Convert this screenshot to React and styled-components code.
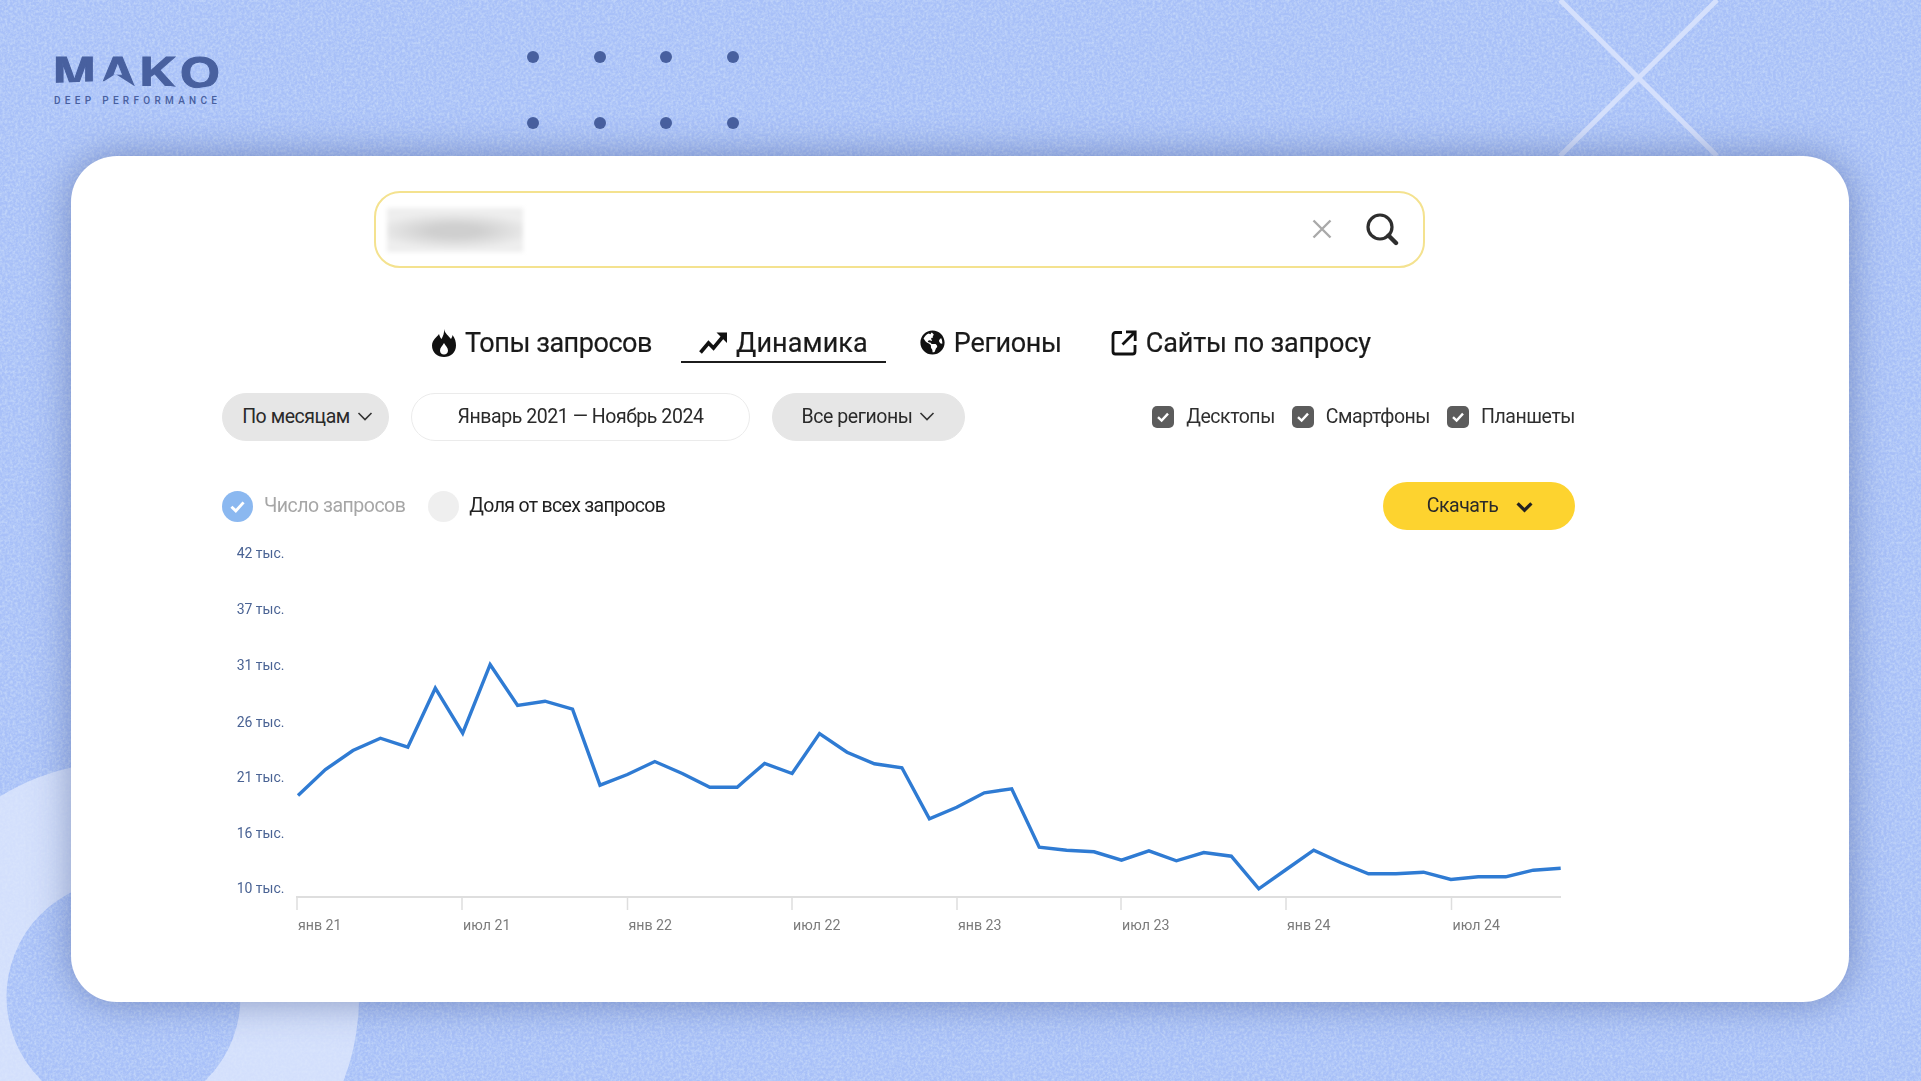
import React from "react";
import styled, { createGlobalStyle } from "styled-components";
import { FaGlobeAmericas } from "react-icons/fa";

const GlobalStyle = createGlobalStyle`
  html, body {
    margin: 0;
    padding: 0;
    background: #a8c0f8;
    font-family: "Roboto", "Noto Sans", sans-serif;
  }
`;

const Page = styled.div`
  position: relative;
  width: 1921px;
  height: 1081px;
  overflow: hidden;
  background: #a8c0f8;
`;

const Backdrop = styled.svg`
  position: absolute;
  top: 0;
  left: 0;
  width: 1921px;
  height: 1081px;
`;

const Header = styled.header`
  position: relative;
  display: flex;
  height: 156px;
  padding-left: 53px;
`;

const Logo = styled.div`
  width: 166px;
  margin-top: 49px;
  color: #48609f;
`;

const LogoMark = styled.div`
  width: 166px;
  height: 48px;
  font-family: "Liberation Sans", sans-serif;
  font-size: 45px;
  font-weight: 700;
  line-height: 48px;
  letter-spacing: 3px;
  white-space: nowrap;
  -webkit-text-stroke: 1px #48609f;
  transform: scaleX(1.14);
  transform-origin: left top;
  clip-path: polygon(0 0, 100% 0, 100% 75%, 87% 75%, 73% 84%, 62% 77%, 43% 77%, 33% 52%, 27% 67%, 23% 67%, 0 71%);
`;

const LogoTag = styled.div`
  margin: -2px 0 0 1px;
  font-size: 10px;
  font-weight: 500;
  line-height: 12px;
  letter-spacing: 4.3px;
  white-space: nowrap;
`;

const DotGrid = styled.div`
  display: grid;
  grid-template-columns: repeat(4, 12px);
  column-gap: 54.7px;
  row-gap: 54px;
  margin: 51px 0 0 308px;
  height: 78px;
`;

const Dot = styled.span`
  width: 12px;
  height: 12px;
  border-radius: 50%;
  background: #48609f;
`;

const Card = styled.main`
  position: relative;
  box-sizing: border-box;
  width: 1778px;
  height: 846px;
  margin-left: 71px;
  padding-top: 35px;
  border-radius: 46px;
  background: #fff;
  box-shadow: 0 0 38px rgba(58, 78, 136, 0.5);
  color: #1c1c1c;
`;

const SearchBox = styled.div`
  box-sizing: border-box;
  display: flex;
  align-items: center;
  width: 1051px;
  height: 77px;
  margin-left: 303px;
  padding: 0 24px 0 11px;
  border: 2px solid #f4e28f;
  border-radius: 26px;
`;

const BlurredQuery = styled.div`
  width: 136px;
  height: 44px;
  background: radial-gradient(ellipse 60% 42% at 50% 52%, #cfcfcf 30%, #eeeeee 100%);
  filter: blur(2px);
`;

const ClearIcon = styled.svg`
  margin: 0 32px 2px auto;
  width: 22px;
  height: 22px;
  stroke: #a9a9a9;
  stroke-width: 2.4;
  fill: none;
`;

const SearchIcon = styled.svg`
  width: 34px;
  height: 34px;
  margin-bottom: 1px;
  stroke: #2e2e2e;
  fill: none;
`;

const Tabs = styled.nav`
  display: flex;
  height: 39px;
  margin: 56px 0 0 343px;
  filter: blur(0.35px);
`;

const Tab = styled.div`
  display: flex;
  align-items: center;
  gap: 9px;
  margin-right: ${(p) => p.$gap || 0}px;
  padding: 0 18px;
  border-bottom: 2px solid ${(p) => (p.$active ? "#1c1c1c" : "transparent")};
  font-size: 27px;
  letter-spacing: ${(p) => p.$track || 0}px;
  color: #1a1a1a;
  white-space: nowrap;
  -webkit-text-stroke: 0.2px #1a1a1a;
  svg {
    flex: none;
    color: #111;
  }
`;

const Body = styled.section`
  width: 1353px;
  margin-left: 151px;
  filter: blur(0.35px);
`;

const Controls = styled.div`
  display: flex;
  align-items: center;
  gap: 22px;
  height: 48px;
  margin-top: 30px;
`;

const Pill = styled.div`
  box-sizing: border-box;
  display: flex;
  align-items: center;
  justify-content: center;
  gap: 7px;
  width: ${(p) => p.$width}px;
  height: 48px;
  padding: 0 0 2px ${(p) => p.$inset || 0}px;
  border-radius: 24px;
  border: 1px solid ${(p) => (p.$outline ? "#ebebeb" : "#e6e6e6")};
  background: ${(p) => (p.$outline ? "#fff" : "#e6e6e6")};
  font-size: 19.5px;
  letter-spacing: -0.45px;
  color: #2a2a2a;
  white-space: nowrap;
`;

const Devices = styled.div`
  display: flex;
  align-items: center;
  gap: 17px;
  margin-left: auto;
`;

const Device = styled.label`
  display: flex;
  align-items: center;
  gap: 12px;
  font-size: 19.5px;
  letter-spacing: -0.45px;
  color: #2f2f2f;
`;

const Caption = styled.span`
  margin-bottom: 2px;
`;

const CheckBox = styled.span`
  display: flex;
  align-items: center;
  justify-content: center;
  width: 22px;
  height: 22px;
  border-radius: 5px;
  background: #5c5c5c;
`;

const Metrics = styled.div`
  display: flex;
  align-items: center;
  height: 48px;
  margin-top: 41px;
`;

const Metric = styled.div`
  display: flex;
  align-items: center;
  gap: ${(p) => (p.$on ? 11 : 10)}px;
  margin-right: 23px;
  font-size: 19.5px;
  letter-spacing: ${(p) => (p.$on ? -0.5 : -0.68)}px;
  color: ${(p) => (p.$on ? "#a6a6a6" : "#222")};
`;

const Radio = styled.span`
  display: flex;
  align-items: center;
  justify-content: center;
  width: 31px;
  height: 31px;
  border-radius: 50%;
  background: ${(p) => (p.$on ? "#8bb8f0" : "#efefef")};
`;

const DownloadButton = styled.button`
  display: flex;
  align-items: center;
  justify-content: center;
  gap: 18px;
  width: 192px;
  height: 48px;
  margin-left: auto;
  padding: 0 0 0 2px;
  border: 0;
  border-radius: 24px;
  background: #fdd32f;
  font-family: inherit;
  font-size: 19.5px;
  letter-spacing: -0.45px;
  color: #2a2a2a;
`;

const Chart = styled.svg`
  display: block;
  width: 1353px;
  height: 410px;
  text {
    font-family: "Roboto", "Noto Sans", sans-serif;
  }
`;

const YLabel = styled.text`
  font-size: 14px;
  fill: #4a6394;
`;

const XLabel = styled.text`
  font-size: 14.2px;
  fill: #7b7b7b;
`;

const Chevron = ({ size = 16, width = 1.6, color = "#333" }) => (
  <svg width={size} height={size} viewBox="0 0 16 16" fill="none" stroke={color} strokeWidth={width}>
    <path d="M1.5 5 8 11.5 14.5 5" />
  </svg>
);

const Check = ({ size = 14, color = "#fff" }) => (
  <svg width={size} height={size} viewBox="0 0 14 14" fill="none" stroke={color} strokeWidth="2.4">
    <path d="M2 7.2 5.6 10.6 12 3.6" />
  </svg>
);

const FlameIcon = () => (
  <svg width="24" height="28" viewBox="0 0 24 28" fill="#111" fillRule="evenodd">
    <path d="M12 0C13 5 17 7 19 10 20 8 20.5 7 20.5 6 23 9 24 13 24 16.5 24 23.5 18.5 28 12 28 5.5 28 0 23.5 0 16.5 0 11 5 8 7 5 8 8 8.5 9 9.5 10 11 7 12.5 4 12 0ZM12 14C10.5 17 8 18.5 8 21.5 8 24 9.8 25.5 12 25.5 14.2 25.5 16 24 16 21.5 16 18.5 13.5 17 12 14Z" />
  </svg>
);

const TrendIcon = () => (
  <svg width="28" height="26" viewBox="0 0 28 26" fill="none">
    <path d="M1.5 22.5 9.5 13l5 5L24 6.5" stroke="#111" strokeWidth="3.6" />
    <path d="M17.5 2.5H28V13Z" fill="#111" />
  </svg>
);

const OpenIcon = () => (
  <svg width="26" height="26" viewBox="0 0 26 26" fill="none" stroke="#111" strokeWidth="2.8">
    <path d="M11 2.5H4.5a2.5 2.5 0 0 0-2.5 2.5v16.5A2.5 2.5 0 0 0 4.5 24h17a2.5 2.5 0 0 0 2.5-2.5V15" />
    <path d="M11.5 14.5 23 3M15 1.8h9.2V11" />
  </svg>
);

const series = [
  795, 769, 750, 737.7, 746.7, 687.7, 732.7, 664, 705, 700.7, 708.7, 784.7, 774, 761, 773, 786.7, 786.7, 763,
  773, 733, 751.7, 763.3, 767.3, 818.3, 806.7, 792.3, 788.3, 846.7, 849.7, 851.3, 859.7, 850.3, 860.3, 852,
  855.7, 888.3, 869, 849.7, 862.3, 873.3, 873.3, 871.7, 879, 876.3, 876.3, 869.7, 867.7,
];
const linePoints = series.map((y, i) => `${(298 + i * 27.45).toFixed(1)},${y + 0.5}`).join(" ");

const yTicks = [
  ["42 тыс.", 552],
  ["37 тыс.", 608],
  ["31 тыс.", 664],
  ["26 тыс.", 721],
  ["21 тыс.", 776],
  ["16 тыс.", 832],
  ["10 тыс.", 887],
];

const xTicks = [
  ["янв 21", 297],
  ["июл 21", 462],
  ["янв 22", 627.5],
  ["июл 22", 792],
  ["янв 23", 957],
  ["июл 23", 1121],
  ["янв 24", 1286],
  ["июл 24", 1451.5],
];

const App = () => (
  <Page>
    <GlobalStyle />
    <Backdrop viewBox="0 0 1921 1081" aria-hidden="true">
      <defs>
        <filter id="grain" x="0" y="0" width="100%" height="100%">
          <feTurbulence type="fractalNoise" baseFrequency="0.38" numOctaves="3" seed="4" />
          <feColorMatrix values="0 0 0 0 0.55  0 0 0 0 0.68  0 0 0 0 0.95  1.8 0 0 0 -0.62" />
          <feGaussianBlur stdDeviation="0.7" />
        </filter>
      </defs>
      <rect width="1921" height="1081" filter="url(#grain)" />
      <circle cx="123.5" cy="997" r="176.25" fill="none" stroke="#dfe8fd" strokeOpacity="0.78" strokeWidth="118.5" />
      <path d="M1560 0 1717 156M1717 0 1560 156" stroke="#d5e0fc" strokeWidth="5" />
    </Backdrop>

    <Header>
      <Logo>
        <LogoMark>MAKO</LogoMark>
        <LogoTag>DEEP PERFORMANCE</LogoTag>
      </Logo>
      <DotGrid>
        {Array.from({ length: 8 }, (_, i) => (
          <Dot key={i} />
        ))}
      </DotGrid>
    </Header>

    <Card>
      <SearchBox>
        <BlurredQuery />
        <ClearIcon viewBox="0 0 22 22">
          <path d="M2.5 2.5 19.5 19.5M19.5 2.5 2.5 19.5" />
        </ClearIcon>
        <SearchIcon viewBox="0 0 34 34">
          <circle cx="15" cy="15" r="12" strokeWidth="3.2" />
          <path d="M23.5 23.5 31 31" strokeWidth="4.4" strokeLinecap="round" />
        </SearchIcon>
      </SearchBox>

      <Tabs>
        <Tab $gap={11} $track={-0.46}>
          <FlameIcon />
          Топы запросов
        </Tab>
        <Tab $active $gap={16} $track={0.1}>
          <TrendIcon />
          Динамика
        </Tab>
        <Tab $gap={13} $track={-0.3}>
          <FaGlobeAmericas size={25} />
          Регионы
        </Tab>
        <Tab $track={-0.16}>
          <OpenIcon />
          Сайты по запросу
        </Tab>
      </Tabs>

      <Body>
        <Controls>
          <Pill $width={167} $inset={4}>
            По месяцам
            <Chevron />
          </Pill>
          <Pill $width={339} $outline>
            Январь 2021 — Ноябрь 2024
          </Pill>
          <Pill $width={193}>
            Все регионы
            <Chevron />
          </Pill>
          <Devices>
            {["Десктопы", "Смартфоны", "Планшеты"].map((name) => (
              <Device key={name}>
                <CheckBox>
                  <Check />
                </CheckBox>
                <Caption>{name}</Caption>
              </Device>
            ))}
          </Devices>
        </Controls>

        <Metrics>
          <Metric $on>
            <Radio $on>
              <Check size={17} />
            </Radio>
            <Caption>Число запросов</Caption>
          </Metric>
          <Metric>
            <Radio />
            <Caption>Доля от всех запросов</Caption>
          </Metric>
          <DownloadButton>
            <Caption>Скачать</Caption>
            <Chevron size={17} width={3} color="#222" />
          </DownloadButton>
        </Metrics>

        <Chart viewBox="222 530 1353 410">
          {yTicks.map(([label, y]) => (
            <YLabel key={label} x="284.5" y={y + 6} textAnchor="end">
              {label}
            </YLabel>
          ))}
          <path d="M296 897H1561" stroke="#dedede" strokeWidth="2" />
          {xTicks.map(([label, x]) => (
            <g key={label}>
              <path d={`M${x} 897v13`} stroke="#dedede" strokeWidth="1.5" />
              <XLabel x={x + 1} y="930">
                {label}
              </XLabel>
            </g>
          ))}
          <polyline points={linePoints} fill="none" stroke="#2f7bd3" strokeWidth="3.4" strokeLinejoin="miter" />
        </Chart>
      </Body>
    </Card>
  </Page>
);

export default App;
